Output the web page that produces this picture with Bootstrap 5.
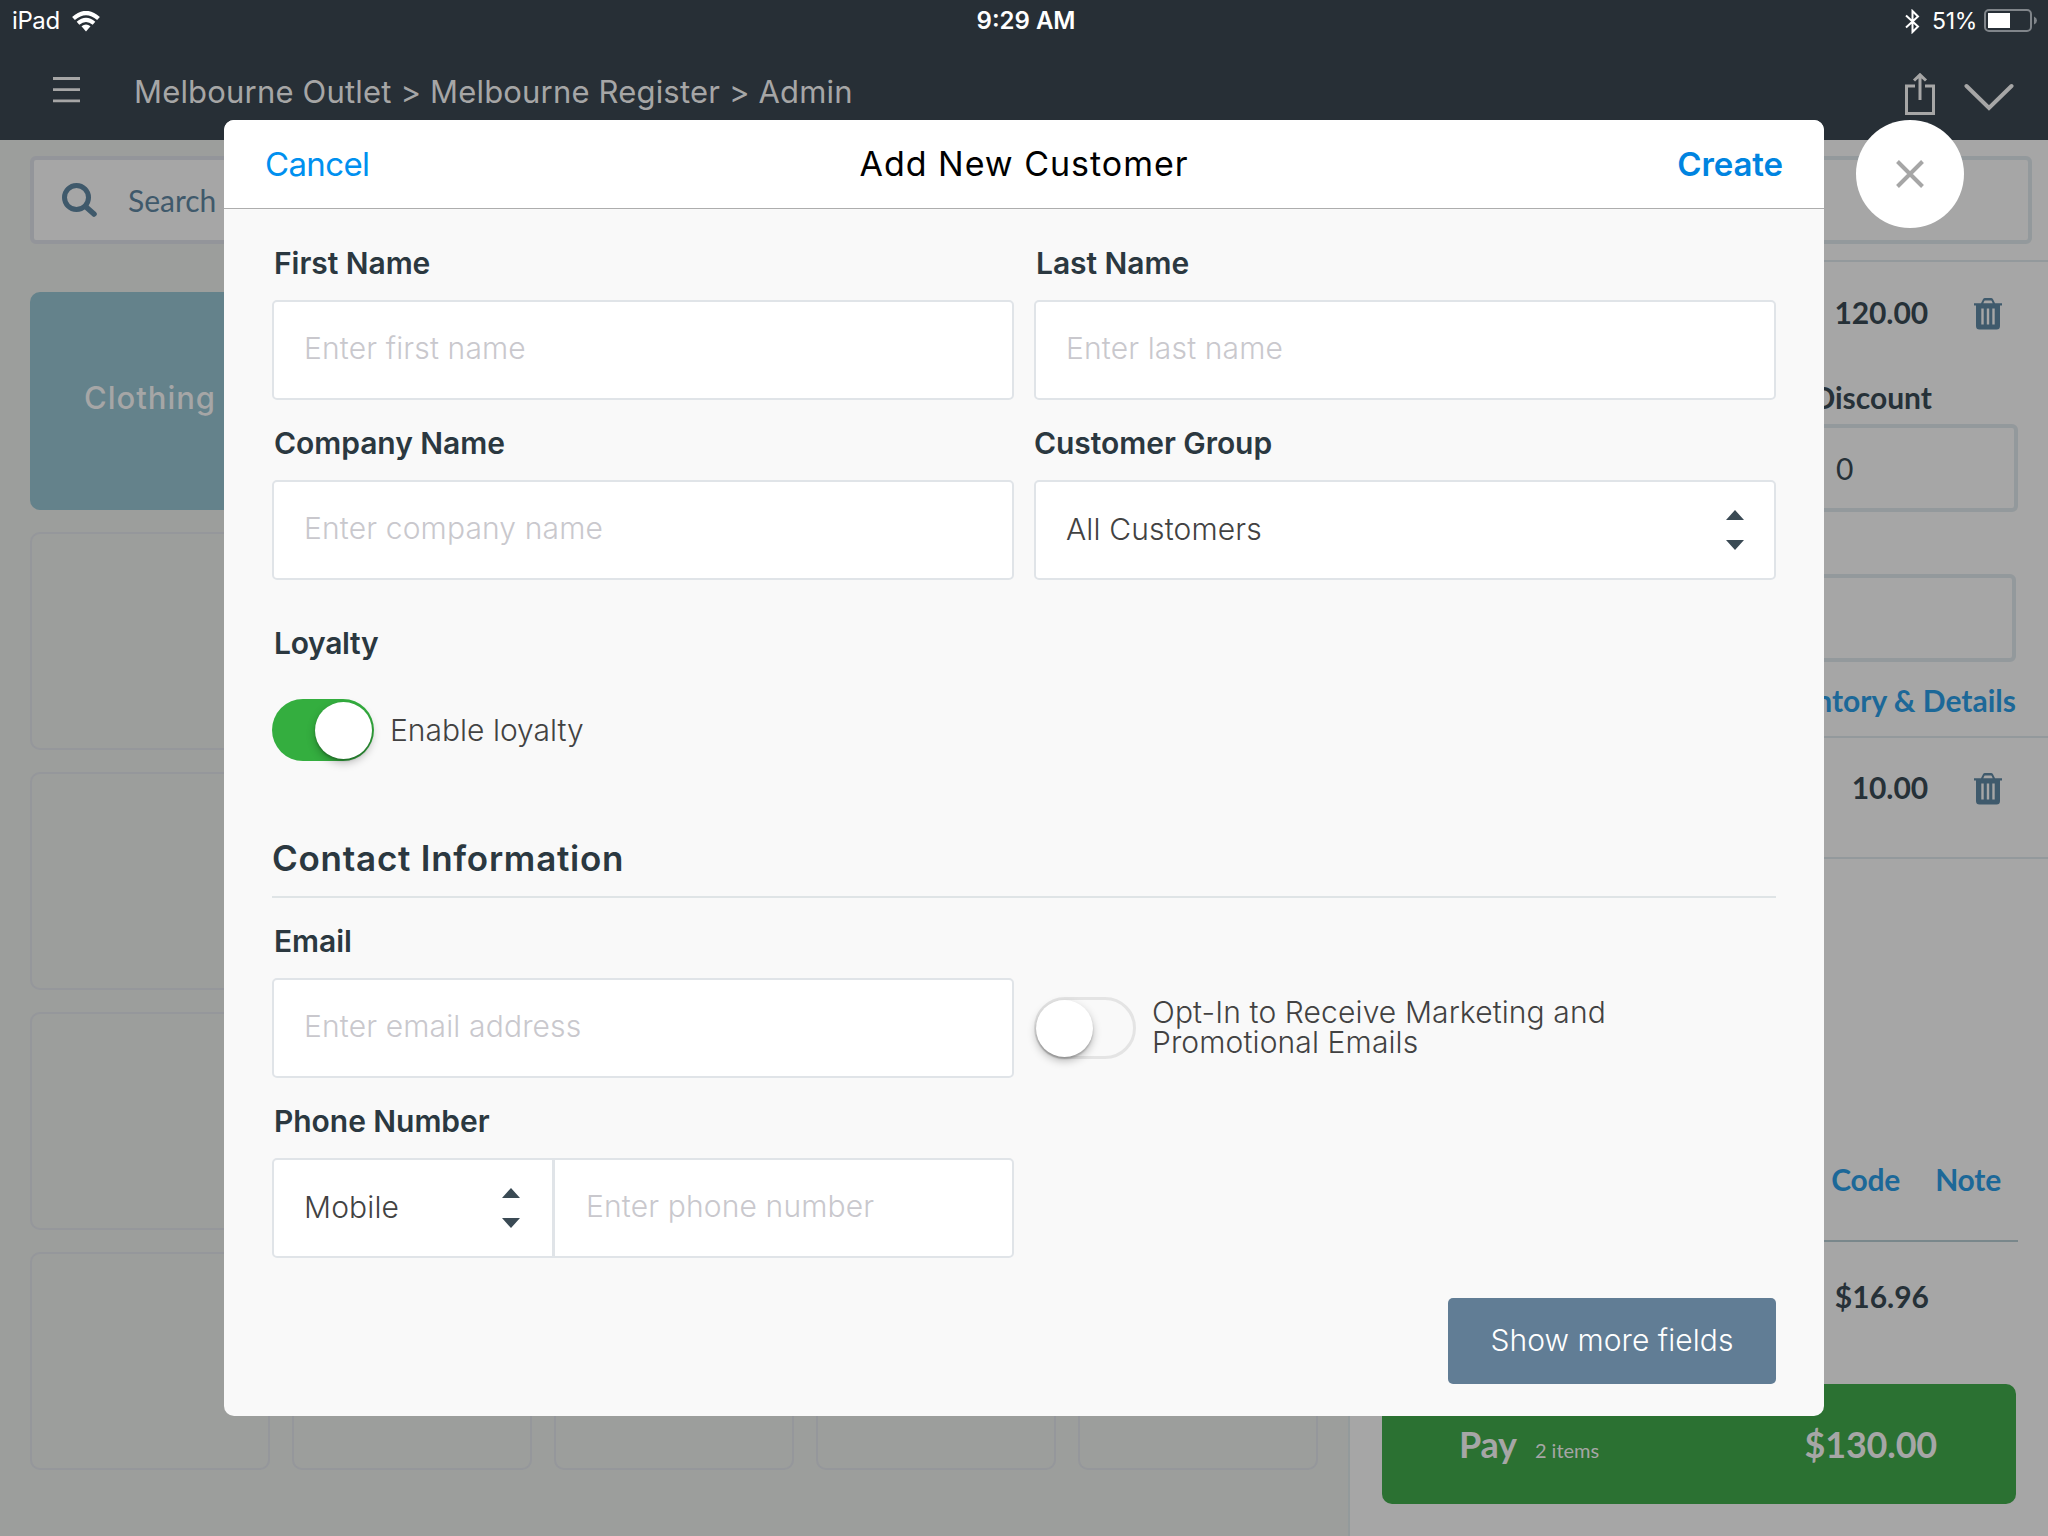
<!DOCTYPE html>
<html lang="en">
<head>
<meta charset="utf-8">
<title>Add New Customer</title>
<link rel="stylesheet" href="https://cdn.jsdelivr.net/npm/bootstrap@5.3.0/dist/css/bootstrap.min.css">
<style>
body{width:2048px;height:1536px;overflow:hidden;background:#a6a6a6;font-family:Inter,"Liberation Sans",sans-serif;font-size:30px;line-height:1;color:#2b3840}
svg{display:block;flex:none}
span,a,h1,h2,label{white-space:nowrap}
a{text-decoration:none}
.top-area{height:140px;background:#272f36;color:#a6a6a6}
.status{height:40px;color:#fff;font-size:24px;padding:2px 11px 0 12px}
.status>div{flex:1 1 0}
.device{letter-spacing:-.4px;margin-right:12px}
.percent{font-size:23px;margin:0 7px 0 12px;letter-spacing:-.3px}
.clock{padding-left:3px}
.crumbs{height:100px;padding:0 34px 0 53px}
.burger{margin-top:37px}
.crumbs-text{font-size:31px;margin-left:54px;line-height:103px;letter-spacing:.18px}
.crumb-tools{padding-top:33px}
.chev{margin:10px 0 0 29px}
.products{width:1348px;height:1396px;background:#9c9e9c;padding:16px 0 0 30px}
.search-box{height:88px;width:1289px;border:4px solid #93959a;border-radius:6px;background:#a6a6a6;color:#3f596b;font-family:Lato,sans-serif;padding-left:28px}
.search-box span{margin-left:31px}
.tiles{display:grid;grid-template-columns:repeat(5,240px);grid-auto-rows:218px;gap:22px;margin-top:48px}
.tile{border:2px solid #95979b;border-radius:10px}
.tile.filled{grid-column:1/-1;width:240px;background:#64828b;border:0;color:#a6a6a6;font-weight:500;font-size:31px;letter-spacing:1px;padding-bottom:8px}
.cart{width:700px;height:1396px;border-left:2px solid #939a9b;font-family:Lato,sans-serif;font-weight:700;color:#263138}
.cart a{color:#1c6898}
.cart .hold{border:4px solid #93999c;border-radius:6px;height:88px}
.cart .line-row{border-bottom:2px solid #93999c}
.find-row{height:122px;padding:16px 16px 0 24px}
.item-row{height:121px}
.item-row.open{height:476px}
.item-top{padding:35px 46px 0 0}
.item-top span{margin:-1px 46px 0 0;letter-spacing:-.1px}
.open .item-top{height:122px;padding-top:36px}
.discount-label{height:40px;padding-right:116px;line-height:26px}
.discount-field{width:220px;margin-left:448px;padding-left:34px}
.note-field{margin:62px 32px 0}
.details-link{padding:23px 32px 0 0}
.links{margin:305px 30px 0 32px;padding-right:17px;height:78px;border-bottom:2px solid #79878b;gap:35px}
.links a{letter-spacing:-.2px}
.tax{height:142px;padding:39px 119px 0 0}
.pay{height:120px;margin:0 32px;border-radius:10px;background:#2b7132;color:#a6a6a6;font-size:36px;padding:0 79px 0 77px;letter-spacing:-.2px}
.count{font-size:20px;margin-left:18px;letter-spacing:0}
.sheet{left:224px;top:120px;width:1600px;height:1296px;border-radius:10px;background:#f9f9f9;overflow:hidden}
.sheet-head{height:89px;background:#fff;border-bottom:1px solid #adadad;padding:0 41px;font-size:34px}
.sheet-head>*{flex:1 1 0}
.cancel{color:#0090ef;font-size:33px;letter-spacing:-.65px}
.create{color:#0084e0;font-size:33px;letter-spacing:-.1px}
.sheet-head h1{font-size:34px;color:#000;font-weight:400;line-height:1;letter-spacing:.98px}
.sheet-body{padding:11px 48px 0}
.lab{display:block;height:80px;line-height:73px;padding:7px 0 0 2px;font-weight:600;letter-spacing:-.05px}
.lab.tight{letter-spacing:-.3px}
.field{height:100px;border:2px solid #e0e4e8;border-radius:5px;background:#fff;font-size:30px;font-weight:300;color:#424242;padding:0 30px 2px;line-height:96px;letter-spacing:.15px}
input.field{padding-bottom:4px}
.field svg{margin-top:2px}
.field::placeholder{color:#c9c8cd;opacity:1}
.two{--bs-gutter-x:20px}
.kind{width:282px;padding-right:32px}
.phone{padding-left:31px}
.loyalty-label{margin-top:20px}
.loyalty-row{margin-top:19px}
.switch{width:102px;height:62px;border-radius:31px;background:#34ae3f;padding:3px 2px;flex:none}
.switch i{display:block;width:57px;height:57px;border-radius:50%;background:#fff;margin-left:auto;box-shadow:0 4px 9px rgba(0,0,0,.25),0 2px 2px rgba(0,0,0,.2)}
.switch.off{background:#f9f9f9;border:3px solid #e4e4e4;padding:0}
.switch.off i{margin:0 0 0 -1px}
.opt{font-weight:300;color:#424242}
.opt-in{padding-top:99px}
.opt-in .opt{margin-left:16px;line-height:30px;letter-spacing:.12px}
.sect{height:137px;padding-top:77px;border-bottom:2px solid #dfe4e6}
.sect h2{font-size:35px;line-height:40px;font-weight:600;margin:0;letter-spacing:.75px}
.more-row{margin-top:40px}
.more{width:328px;height:86px;border-radius:5px;background:#617d95;color:#fff;font-size:30px;font-weight:300;padding:0 0 1px;border:0;letter-spacing:.05px}
.close-round{left:1856px;top:120px;width:108px;height:108px;border-radius:50%;background:#fff}
</style>
<script src="https://cdn.jsdelivr.net/npm/bootstrap@5.3.0/dist/js/bootstrap.bundle.min.js"></script>
</head>
<body class="position-relative">
<svg width="0" height="0" class="position-absolute"><defs>
<symbol id="trash" viewBox="0 0 28 32"><path fill="#3f5a6c" fill-rule="evenodd" d="M0 5.200H7L9 1.200Q9.600 0 11 0H17Q18.400 0 19 1.200L21 5.200H28V7.400H26V28Q26 31.500 22.500 31.500H5.500Q2 31.500 2 28V7.400H0ZM9.300 5.200H18.700L17.600 2.800Q17.400 2.400 17 2.400H11Q10.600 2.400 10.400 2.800ZM7.300 10.500V26.500H9.700V10.500ZM12.800 10.500V26.500H15.200V10.500ZM18.300 10.500V26.500H20.700V10.500Z"/></symbol>
<symbol id="updown" viewBox="0 0 18 40"><path fill="#3a4a54" d="M9 0L18 10H0ZM0 30H18L9 40Z"/></symbol>
</defs></svg>

<header class="top-area">
  <div class="status d-flex align-items-center">
    <div class="d-flex align-items-center"><span class="device">iPad</span>
      <svg width="28" height="21" viewBox="0 0 28 21"><g fill="none" stroke="#fff"><path d="M1.500 7.500Q14 -3.500 26.500 7.500" stroke-width="4.200"/><path d="M6 12.300Q14 5.300 22 12.300" stroke-width="4"/></g><path fill="#fff" d="M9.500 15.300Q14 11.500 18.500 15.300L14 20.500Z"/></svg>
    </div>
    <span class="clock fw-semibold">9:29 AM</span>
    <div class="d-flex align-items-center justify-content-end">
      <svg width="15" height="25" viewBox="0 0 15 25"><path d="M1 6.500L13 17.500L7.500 23V2L13 7.500L1 18.500" fill="none" stroke="#fff" stroke-width="2"/></svg>
      <span class="percent">51%</span>
      <svg width="53" height="24" viewBox="0 0 53 24"><rect x="1" y="1" width="46" height="21" rx="4" fill="none" stroke="#80858a" stroke-width="2"/><rect x="4" y="4" width="22" height="15" fill="#fff"/><path d="M50 7.500Q53 9 53 11.500T50 15.500Z" fill="#80858a"/></svg>
    </div>
  </div>
  <nav class="crumbs d-flex">
    <svg class="burger" width="27" height="26" viewBox="0 0 27 26"><path d="M0 1.500H27M0 12.700H27M0 23.800H27" stroke="#a6a6a6" stroke-width="2.800"/></svg>
    <span class="crumbs-text">Melbourne Outlet &gt; Melbourne Register &gt; Admin</span>
    <div class="crumb-tools ms-auto d-flex">
      <svg width="30" height="42" viewBox="0 0 30 42"><path d="M10 13H1.500V40.500H28.500V13H20M15 27V2M9 7.500L15 1.800L21 7.500" fill="none" stroke="#a6a6a6" stroke-width="3"/></svg>
      <svg class="chev" width="50" height="28" viewBox="0 0 50 28"><path d="M2.500 3L25 25L47.500 3" fill="none" stroke="#a6a6a6" stroke-width="4" stroke-linecap="round"/></svg>
    </div>
  </nav>
</header>

<main class="d-flex">
  <section class="products">
    <div class="search-box d-flex align-items-center">
      <svg width="35" height="34" viewBox="0 0 35 34"><circle cx="14.500" cy="14.500" r="12" fill="none" stroke="#3f596b" stroke-width="5"/><path d="M23.500 23.500L32 31" stroke="#3f596b" stroke-width="5.500" stroke-linecap="round"/></svg>
      <span>Search</span>
    </div>
    <div class="tiles">
      <div class="tile filled d-flex align-items-center justify-content-center">Clothing</div>
      <div class="tile"></div><div class="tile"></div><div class="tile"></div><div class="tile"></div><div class="tile"></div>
      <div class="tile"></div><div class="tile"></div><div class="tile"></div><div class="tile"></div><div class="tile"></div>
      <div class="tile"></div><div class="tile"></div><div class="tile"></div><div class="tile"></div><div class="tile"></div>
      <div class="tile"></div><div class="tile"></div><div class="tile"></div><div class="tile"></div><div class="tile"></div>
    </div>
  </section>
  <section class="cart d-flex flex-column">
    <div class="line-row find-row"><div class="hold"></div></div>
    <div class="line-row item-row open">
      <div class="item-top d-flex justify-content-end align-items-start"><span>120.00</span><svg width="28" height="32"><use href="#trash"/></svg></div>
      <div class="discount-label text-end">Discount</div>
      <div class="hold discount-field d-flex align-items-center fw-normal">0</div>
      <div class="hold note-field"></div>
      <div class="details-link text-end"><a href="#">Inventory &amp; Details</a></div>
    </div>
    <div class="line-row item-row"><div class="item-top d-flex justify-content-end align-items-start"><span>10.00</span><svg width="28" height="32"><use href="#trash"/></svg></div></div>
    <div class="links d-flex justify-content-end"><a href="#">Code</a><a href="#">Note</a></div>
    <div class="tax d-flex justify-content-end"><span>$16.96</span></div>
    <div class="pay d-flex align-items-center justify-content-between"><div class="d-flex align-items-baseline"><span>Pay</span><span class="count fw-normal">2 items</span></div><span>$130.00</span></div>
  </section>
</main>

<div class="sheet position-absolute" role="dialog">
  <div class="sheet-head d-flex align-items-center">
    <a href="#" class="cancel">Cancel</a>
    <h1 class="m-0 text-center">Add New Customer</h1>
    <a href="#" class="create text-end fw-semibold">Create</a>
  </div>
  <form class="sheet-body">
    <div class="row two">
      <div class="col-6"><label class="lab">First Name</label><input class="form-control field" placeholder="Enter first name"></div>
      <div class="col-6"><label class="lab">Last Name</label><input class="form-control field" placeholder="Enter last name"></div>
      <div class="col-6"><label class="lab">Company Name</label><input class="form-control field" placeholder="Enter company name"></div>
      <div class="col-6"><label class="lab ps-0">Customer Group</label><div class="field d-flex align-items-center justify-content-between"><span>All Customers</span><svg width="18" height="40"><use href="#updown"/></svg></div></div>
    </div>
    <label class="lab tight loyalty-label">Loyalty</label>
    <div class="loyalty-row d-flex align-items-center"><div class="switch"><i></i></div><span class="opt ms-3">Enable loyalty</span></div>
    <div class="sect"><h2>Contact Information</h2></div>
    <div class="row two">
      <div class="col-6"><label class="lab">Email</label><input class="form-control field" placeholder="Enter email address"></div>
      <div class="opt-in col-6 d-flex"><div class="switch off"><i></i></div><div class="opt">Opt-In to Receive Marketing and<br>Promotional Emails</div></div>
      <div class="col-6"><label class="lab">Phone Number</label>
        <div class="input-group flex-nowrap"><div class="field kind d-flex align-items-center justify-content-between rounded-end-0">Mobile<svg width="18" height="40"><use href="#updown"/></svg></div><input class="form-control field phone" placeholder="Enter phone number"></div></div>
    </div>
    <div class="more-row d-flex justify-content-end"><button type="button" class="btn more">Show more fields</button></div>
  </form>
</div>
<div class="close-round position-absolute d-flex align-items-center justify-content-center"><svg width="28" height="28" viewBox="0 0 28 28"><path d="M1.500 1.500L26.500 26.500M26.500 1.500L1.500 26.500" stroke="#a6a6a6" stroke-width="4"/></svg></div>
</body>
</html>
